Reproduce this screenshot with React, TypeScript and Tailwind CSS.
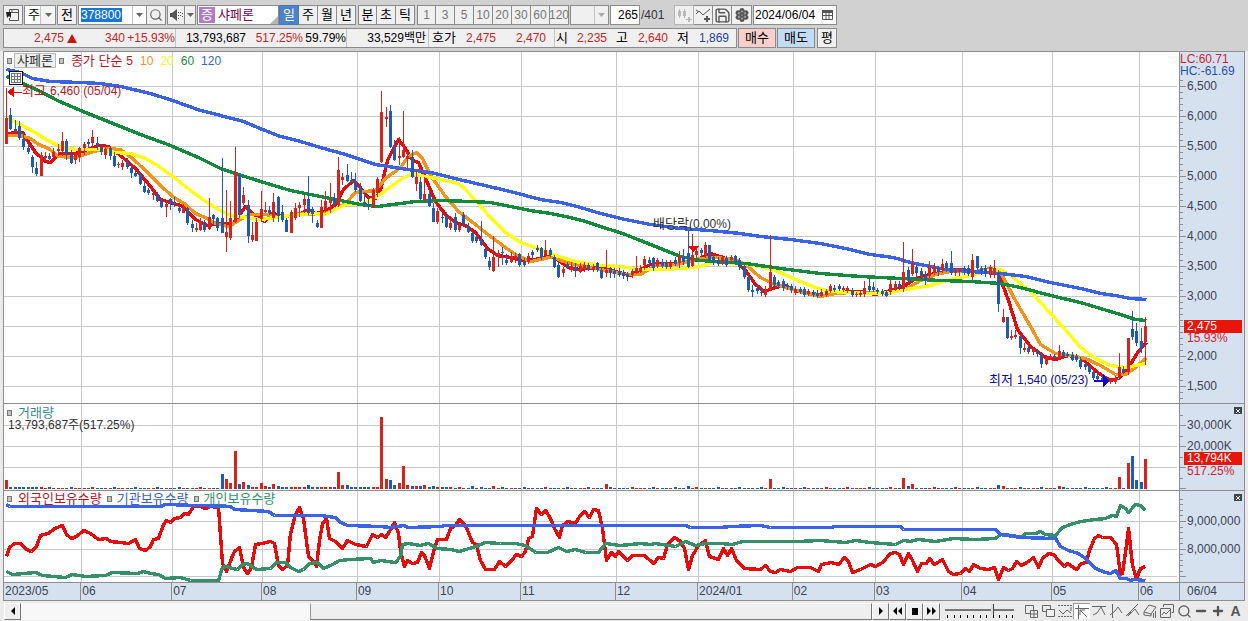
import type { ReactNode } from 'react';
import { Search, Save, Settings, Minus, Plus } from 'lucide-react';

type Candle = [number, number, number, number, number];

// high, body top, body bottom, low, rising (1) or falling (0)
const candles: Candle[] = [
  [88,118,144,144,1],[108,115,129,130,0],[120,129,131,132,0],[121,126,138,140,0],[132,139,147,150,0],
  [143,148,152,154,0],[155,157,167,173,0],[162,168,174,176,0],[152,155,176,176,1],[152,156,158,160,1],
  [153,156,159,160,0],[148,152,157,158,1],[144,149,151,156,1],[132,141,151,156,1],[139,141,154,160,0],
  [150,155,163,164,0],[152,154,160,164,1],[147,148,157,162,1],[142,144,148,155,1],[139,142,144,147,0],
  [130,137,143,148,1],[137,143,145,150,0],[145,147,152,155,0],[147,149,155,159,1],[147,148,156,160,0],
  [152,156,166,167,0],[162,164,165,168,1],[160,163,167,170,1],[158,162,167,169,0],[166,168,173,178,0],
  [168,173,176,177,0],[172,174,184,185,0],[182,186,192,193,0],[188,190,193,195,0],[188,193,195,200,1],
  [192,194,201,202,0],[198,201,207,208,0],[202,204,207,217,1],[198,199,204,210,0],[197,203,205,207,0],
  [205,208,211,213,0],[204,207,213,213,1],[207,208,223,225,0],[220,224,228,232,0],[223,228,230,232,1],
  [218,221,230,231,1],[220,222,230,232,0],[198,217,229,230,1],[214,215,219,225,0],[217,218,228,231,0],
  [158,218,233,233,0],[190,232,237,252,1],[201,218,238,240,1],[147,172,222,223,1],[173,174,215,218,0],
  [187,195,203,205,1],[200,205,236,243,0],[222,235,240,242,1],[218,222,241,241,1],[191,209,219,221,1],
  [202,210,212,213,1],[206,210,213,215,0],[193,202,218,222,1],[196,197,216,222,0],[205,212,220,222,0],
  [218,220,232,232,0],[210,212,233,233,1],[203,208,218,220,1],[202,205,208,217,1],[195,199,205,213,1],
  [176,199,213,215,0],[207,209,214,223,0],[220,223,227,228,0],[200,207,228,228,1],[191,201,210,212,1],
  [183,200,203,213,1],[193,198,204,207,0],[157,170,205,207,1],[173,177,180,185,1],[164,175,181,182,0],
  [172,180,182,183,0],[173,181,190,192,0],[183,187,201,202,0],[192,202,204,207,0],[198,204,206,210,0],
  [188,190,207,208,1],[177,179,193,197,1],[91,112,162,163,1],[107,117,119,127,1],[105,111,147,148,0],
  [140,147,160,161,0],[137,156,158,165,1],[111,150,157,158,1],[152,156,159,170,1],[150,157,177,178,0],
  [170,177,184,191,1],[177,182,199,200,0],[177,194,200,202,1],[190,194,206,207,0],[203,208,222,222,0],
  [208,211,222,224,1],[213,217,218,223,0],[212,217,227,228,0],[218,223,228,230,1],[213,217,230,232,0],
  [222,225,230,232,1],[212,215,224,227,0],[223,226,232,233,0],[232,233,241,243,0],[235,237,241,243,0],
  [221,240,245,246,0],[247,249,257,259,0],[257,261,267,270,0],[236,257,271,272,1],[250,253,257,267,1],
  [247,252,253,265,0],[254,260,263,265,0],[252,256,262,263,1],[253,256,258,263,1],[253,254,265,267,0],
  [258,262,265,267,0],[253,256,262,264,1],[250,252,255,260,0],[245,248,250,252,0],[247,248,257,260,0],
  [240,250,255,257,1],[248,250,255,257,0],[255,257,267,268,0],[262,265,277,278,0],[267,269,273,277,1],
  [262,264,267,268,0],[262,266,270,272,1],[263,267,271,277,0],[263,266,272,273,1],[262,265,269,272,1],
  [263,265,269,271,0],[264,267,270,272,1],[262,263,270,272,0],[267,270,278,279,0],[250,270,273,277,1],
  [267,269,273,278,0],[268,271,274,278,0],[268,271,275,277,0],[270,273,276,279,0],[272,274,277,281,0],
  [269,271,275,278,1],[256,268,272,274,1],[265,268,272,273,1],[256,259,265,270,1],[257,260,263,267,0],
  [257,258,268,271,0],[258,260,266,268,1],[259,262,266,268,0],[260,263,267,269,0],[260,263,267,269,1],
  [257,260,264,266,0],[251,256,263,268,1],[249,256,262,264,0],[231,253,267,268,0],[234,255,266,267,1],
  [249,251,255,258,1],[248,250,253,256,0],[242,245,255,258,1],[245,245,260,262,0],[254,257,263,265,0],
  [257,260,264,266,0],[255,257,263,265,1],[256,258,265,267,0],[255,257,260,263,1],[255,256,262,264,0],
  [258,260,267,270,0],[265,266,277,279,0],[275,277,290,292,0],[285,290,292,297,0],[284,288,291,294,0],
  [288,292,293,296,0],[286,290,295,297,1],[235,272,288,290,1],[275,277,285,287,0],[280,282,286,288,0],
  [279,281,288,291,0],[283,285,287,290,0],[284,286,290,293,0],[286,289,293,295,1],[287,289,292,294,0],
  [287,289,295,297,0],[289,291,294,296,1],[290,292,295,297,0],[290,293,296,298,0],[289,292,296,297,1],
  [289,291,295,297,1],[284,286,291,293,1],[285,288,290,292,0],[284,286,289,291,0],[286,288,290,292,1],
  [286,288,291,293,1],[288,291,295,297,0],[292,294,295,297,1],[291,293,295,297,1],[281,288,294,297,1],
  [279,286,290,292,0],[282,287,290,292,0],[288,290,292,294,0],[289,291,294,296,0],[290,292,296,297,0],
  [280,284,292,295,1],[281,284,288,291,1],[281,284,287,290,0],[242,272,289,292,1],[267,270,281,283,0],
  [249,263,274,276,1],[265,267,273,278,0],[268,271,275,279,0],[271,275,280,285,0],[261,266,276,281,1],
  [263,267,273,275,1],[266,268,271,276,0],[259,264,270,273,1],[261,263,268,272,0],[251,263,273,275,0],
  [268,271,273,276,1],[268,270,272,276,1],[266,268,271,275,0],[265,268,274,276,0],[254,260,277,280,1],
  [256,256,268,270,0],[266,268,271,275,0],[265,268,274,277,0],[265,267,275,278,1],[260,268,275,278,1],
  [270,273,304,312,0],[309,317,322,323,1],[317,317,338,339,0],[330,336,338,340,1],[330,335,337,339,1],
  [335,336,348,354,0],[343,348,350,352,1],[346,348,352,354,0],[347,349,352,355,1],[349,351,354,357,0],
  [353,355,364,368,0],[355,357,364,365,1],[354,356,358,360,1],[354,356,358,359,0],[345,351,358,360,1],
  [350,352,356,358,0],[352,354,356,358,0],[352,355,360,361,0],[354,356,360,362,0],[357,360,367,369,0],
  [361,364,367,370,0],[365,367,372,374,0],[370,372,378,380,0],[373,376,379,382,0],[375,378,380,382,0],
  [377,379,382,384,0],[378,380,382,384,1],[376,378,382,384,1],[353,367,377,380,1],[366,369,372,374,0],
  [338,338,372,375,1],[311,329,337,340,0],[323,331,343,346,0],[328,341,349,353,0],[317,326,342,365,1],
];

// bar heights of the busy days, every other day stays near zero
const busyDays: Record<number, number> = {
  0: 9, 50: 15, 51: 10, 52: 6, 53: 38, 54: 5, 55: 7, 56: 4, 59: 6, 60: 3, 62: 5, 63: 3, 70: 4, 77: 17, 78: 4, 79: 4,
  87: 72, 88: 10, 89: 9, 90: 4, 91: 6, 92: 23, 93: 4, 94: 3, 95: 3, 96: 3, 97: 4, 99: 3, 108: 3, 113: 3, 139: 5,
  158: 3, 177: 10, 208: 11, 209: 3, 210: 5, 230: 4, 231: 3, 244: 3, 258: 12, 260: 26, 261: 33, 262: 9, 263: 7, 264: 30,
};

const RED = '#d4241c';
const BLUE = '#1f5bb5';

const ma120 = '6,69 20,72 32,78 50,81 80,82 100,83 120,86 150,93 172,100 200,110 220,115 243,121 262,129 280,136 300,141 320,147 345,154 375,164 400,168 430,172 450,177 480,184 510,191 540,199 560,202 580,207 600,213 620,218 650,224 680,228 710,230 740,233 760,236 790,239 820,243 845,248 870,254 893,257 910,262 930,266 945,269 970,271 1000,273 1025,276 1050,282 1080,288 1100,293 1115,295 1130,298 1146,299';
const ma60 = '6,76 20,82 40,91 57,100 80,110 100,118 120,126 140,134 170,145 200,158 220,168 235,173 260,181 290,190 315,195 330,198 360,204 377,206 400,203 415,201 440,200 470,201 490,202 510,206 530,210 550,213 570,217 585,221 600,226 622,233 640,240 660,248 680,256 700,260 730,262 745,263 780,268 820,273 860,276 900,278 940,280 970,281 1000,283 1020,287 1050,295 1080,302 1100,308 1120,314 1135,319 1146,320';
const ma20 = '6,118 20,124 33,131 45,139 60,146 75,149 100,149 115,152 130,153 145,158 160,167 175,178 190,190 205,201 218,209 230,215 245,217 260,219 275,217 290,215 310,213 325,214 337,208 345,204 360,204 372,199 385,190 400,179 412,173 425,176 440,179 455,182 463,187 475,200 490,217 505,232 520,242 535,247 555,255 575,261 600,265 620,266 640,269 660,269 680,268 700,266 712,262 725,262 740,263 760,266 775,270 795,279 815,287 830,291 850,292 870,293 890,292 905,289 930,285 950,279 970,275 990,270 1000,269 1010,275 1030,291 1050,313 1070,335 1080,347 1095,358 1110,365 1125,367 1140,364 1146,363';
const ma10 = '6,135 20,135 30,138 38,144 48,148 58,156 75,157 90,152 105,148 120,149 132,158 145,170 160,185 172,196 185,204 195,213 207,218 215,223 228,226 240,219 250,214 265,214 280,217 300,213 320,214 333,210 345,203 355,192 375,190 385,178 400,167 408,156 416,152 422,158 430,175 445,196 458,211 475,224 490,236 505,247 515,254 530,261 545,258 553,256 560,260 570,263 590,267 610,271 625,274 640,274 655,265 675,264 700,258 715,257 735,259 745,264 760,277 772,283 785,287 800,291 820,296 835,293 850,292 870,292 885,293 905,289 920,280 935,274 950,271 975,271 990,268 1000,272 1015,300 1030,326 1040,344 1055,353 1070,355 1085,358 1100,365 1115,374 1125,374 1135,367 1146,357';
const ma5 = '6,133 22,132 27,140 35,152 45,161 50,162 60,153 75,153 90,148 98,145 108,146 120,155 135,168 150,186 160,199 170,202 183,206 195,219 207,225 220,223 232,224 240,213 245,206 252,213 264,221 272,213 285,216 300,213 308,209 315,213 325,211 335,204 343,189 353,180 358,185 368,197 375,198 380,190 387,160 393,148 398,139 405,148 412,160 418,162 425,178 435,201 445,214 455,222 465,225 475,232 487,248 497,255 510,257 522,260 535,259 550,255 558,260 570,268 580,269 600,266 615,271 630,275 640,269 650,264 665,263 680,263 695,260 710,253 725,258 737,262 745,270 755,284 764,291 775,287 785,285 795,290 810,293 825,295 840,291 860,291 875,294 890,290 903,286 915,278 925,275 940,272 955,269 975,271 990,268 998,273 1008,300 1017,329 1030,346 1045,357 1055,359 1068,355 1080,357 1090,366 1100,374 1110,380 1118,378 1127,369 1137,352 1146,342';

const foreign = '6,556 9,547 14,543 20,543 26,549 31,551 36,546 40,535 48,533 54,528 62,525 66,534 71,538 76,536 83,530 90,533 98,539 106,538 110,541 120,542 128,543 135,539 139,548 145,550 150,546 153,539 158,538 163,524 166,520 170,522 174,518 180,517 184,513 188,514 193,506 200,506 205,508 210,506 218,507 220,535 222,563 226,571 231,558 234,551 239,547 243,567 247,573 251,567 255,544 262,543 270,541 274,543 278,565 282,569 287,565 290,533 295,514 299,507 303,518 308,556 314,562 316,566 319,540 322,523 326,518 329,538 335,541 342,548 347,540 355,544 366,546 372,534 377,537 381,534 385,537 389,531 394,522 398,533 400,550 404,566 407,560 412,563 417,562 421,552 424,555 429,568 434,548 437,539 446,539 450,528 455,525 459,519 465,525 472,542 476,544 480,560 485,569 494,569 499,561 505,566 511,560 516,554 521,556 525,551 528,538 532,536 536,508 541,514 545,510 550,518 554,528 559,537 562,525 567,521 575,523 579,516 584,511 589,517 593,509 598,510 602,528 606,560 611,552 615,556 618,551 627,560 632,555 644,555 653,563 658,557 663,558 667,544 674,537 680,541 684,548 688,569 692,555 698,545 705,540 709,556 718,559 723,548 727,555 731,548 736,560 744,568 760,569 765,565 770,571 775,572 780,569 790,571 797,567 810,567 818,571 821,564 831,562 838,564 844,557 848,561 852,572 860,569 870,564 875,566 882,562 890,553 895,552 899,554 903,564 908,553 912,560 917,571 921,563 926,563 929,558 934,564 942,559 948,571 953,574 960,573 965,568 969,571 973,564 980,568 988,569 994,567 998,579 1003,567 1008,570 1012,568 1016,561 1021,565 1028,561 1033,557 1038,567 1042,558 1048,553 1053,554 1058,560 1064,566 1067,563 1076,569 1081,563 1086,562 1089,550 1094,538 1098,535 1102,537 1110,537 1116,544 1120,574 1122,573 1125,552 1128,528 1132,565 1136,578 1140,568 1145,566';
const institution = '6,504 9,506 160,506 165,504 230,506 234,509 268,511 274,515 320,515 335,517 340,522 347,525 380,526 390,527 403,525 408,527 440,526 445,525 685,525 690,527 720,527 730,526 760,525 770,527 830,527 835,526 900,526 903,529 995,529 1000,534 1012,535 1020,537 1055,538 1060,546 1068,550 1078,553 1085,558 1095,568 1105,572 1110,573 1115,570 1120,578 1126,578 1130,580 1134,579 1145,580';
const retail = '6,571 12,574 35,572 42,575 65,577 72,574 85,576 105,575 112,572 137,573 143,571 150,573 158,574 165,578 180,577 190,580 218,580 222,567 226,566 232,568 237,569 242,564 247,563 256,569 270,568 276,562 285,562 290,567 298,571 303,569 309,563 317,562 323,568 332,564 339,560 350,559 370,558 373,562 380,560 395,562 400,556 402,544 408,543 420,545 428,543 437,548 450,549 459,551 475,546 485,542 500,543 515,543 525,545 535,552 547,552 558,547 566,551 575,549 585,552 598,552 605,543 620,545 640,543 650,544 655,543 675,546 685,541 695,545 705,543 720,543 732,544 742,541 797,541 820,540 845,542 855,540 870,542 895,544 903,540 910,541 918,539 935,541 953,538 975,539 995,538 1000,534 1020,537 1025,533 1035,533 1040,531 1045,534 1055,535 1062,527 1070,524 1080,521 1095,519 1105,518 1112,515 1116,516 1120,505 1125,508 1128,512 1135,504 1140,505 1145,510';

const months: [string, number][] = [
  ['2023/05', 77], ['06', 91], ['07', 90], ['08', 95], ['09', 82], ['10', 82], ['11', 95],
  ['12', 82], ['2024/01', 95], ['02', 82], ['03', 87], ['04', 90], ['05', 87], ['06', 40],
];
const monthLines = [81, 172, 262, 357, 439, 521, 616, 698, 793, 875, 962, 1052, 1139];

const candleX = (i: number) => Math.round(6 + i * 4.314);
const range = (from: number, to: number, step: number) =>
  Array.from({ length: Math.floor((to - from) / step) + 1 }, (_, i) => from + i * step);

const Grid = ({ top, bottom, rows }: { top: number; bottom: number; rows: number[] }) => (
  <g fill="#c9c9cd">
    {monthLines.map((x) => <rect key={x} x={x} y={top} width={1} height={bottom - top} />)}
    {rows.map((y) => <rect key={y} x={4} y={y} width={1173} height={1} />)}
  </g>
);

const Plot = ({ top, bottom, rows, children }: { top: number; bottom: number; rows: number[]; children: ReactNode }) => (
  <svg
    className="absolute inset-0 h-full w-full"
    viewBox={`4 ${top} 1175 ${bottom - top}`}
    preserveAspectRatio="none"
    shapeRendering="crispEdges"
  >
    <Grid top={top} bottom={bottom} rows={rows} />
    {children}
  </svg>
);

const Line = ({ points, color }: { points: string; color: string }) => (
  <polyline points={points} transform="translate(0.5 0.5)" fill="none" stroke={color} strokeWidth={3.4} strokeLinejoin="round" />
);

const Ticks = ({ top, bottom, minor, major }: { top: number; bottom: number; minor: number[]; major: number[] }) => (
  <svg className="absolute left-0 top-0 h-full w-2" viewBox={`0 ${top} 8 ${bottom - top}`} preserveAspectRatio="none" shapeRendering="crispEdges">
    {minor.map((y) => <rect key={y} x={0} y={y} width={3} height={1} fill="#8a8f98" />)}
    {major.map((y) => <rect key={y} x={0} y={y} width={6} height={1} fill="#8a8f98" />)}
  </svg>
);

const Bullet = () => <span className="h-[6px] w-[5px] border border-[#777] bg-[#c4c4c4]" />;

const CloseBox = ({ label }: { label: string }) => (
  <button aria-label={label} className="absolute right-[2px] top-[3px] flex h-[7px] w-2 items-center justify-center bg-[#3c4450]">
    <svg width="4" height="4" viewBox="0 0 4 4" stroke="#fff" strokeWidth="1"><path d="M0 0l4 4M4 0l-4 4" /></svg>
  </button>
);

const Caret = ({ className = 'fill-[#666]' }: { className?: string }) => (
  <svg width="7" height="4" viewBox="0 0 7 4" className={className}><path d="M0 0h7L3.500 4z" /></svg>
);

const box = 'flex h-5 items-center justify-center border border-[#8b8b8b] bg-[#f0f0f0]';

const Toolbar = () => (
  <div className="flex items-center pl-[3px] pt-[5px]">
    <button aria-label="창 배치" className={`${box} w-5`}>
      <svg width="14" height="14" viewBox="0 0 14 14" fill="none" stroke="#555">
        <path d="M3.500 4v-2.500h9v11h-9v-2.500M4 4.500h8M6 1.500v3" />
        <path d="M0 4h5v6l-2-2-2 2z" fill="#222" stroke="none" />
      </svg>
    </button>
    <div className={`${box} relative ml-[1px] w-8 bg-white`}>
      <select aria-label="종목 구분" className="h-full w-full appearance-none bg-transparent pl-[3px] text-[13px] leading-4">
        <option>주</option>
      </select>
      <span className="pointer-events-none absolute inset-y-0 right-0 flex w-[15px] items-center justify-center border-l border-[#c4c4c4] bg-[#f4f4f4]"><Caret /></span>
    </div>
    <button className={`${box} ml-[1px] w-5 text-[13px]`}>전</button>
    <div className={`${box} ml-[1px] w-[69px] justify-start bg-white`}>
      <label className="flex min-w-0 flex-1 items-center pl-[2px]">
        <input aria-label="종목코드" defaultValue="378800" className="h-[14px] w-[41px] bg-[#1577d3] text-[12px] text-white outline-none" />
      </label>
      <button aria-label="최근 종목" className="flex h-full w-[14px] items-center justify-center border-l border-[#c4c4c4]"><Caret /></button>
    </div>
    <button aria-label="종목 검색" className={`${box} w-[19px] border-l-0`}><Search size={14} color="#666" strokeWidth={2} /></button>
    <button aria-label="소리" className={`${box} ml-[1px] w-[18px]`}>
      <svg width="13" height="12" viewBox="0 0 13 12" fill="#555">
        <path d="M0 4h2l5-4v12l-5-4h-2z" /><path d="M8 3h1v1h-1zM8 6h1v1h-1zM8 9h1v1h-1zM10 3h1v1h-1zM10 6h1v1h-1zM12 4h1v1h-1zM12 7h1v1h-1z" />
      </svg>
    </button>
    <button aria-label="소리 메뉴" className={`${box} w-[11px] border-l-0`}><Caret /></button>
    <div className={`${box} relative ml-[1px] w-[82px] justify-start bg-white pl-[1px] text-[13px]`}>
      <span className="flex h-4 w-4 items-center justify-center bg-[#b07cc6] text-white">증</span>
      <span className="pl-[3px] text-[#780050]">샤페론</span>
      <svg className="absolute bottom-0 right-0" width="8" height="8" viewBox="0 0 8 8" fill="#b4b4b4"><path d="M8 0v8h-8z" /></svg>
    </div>
    <div className="flex text-[13px]">
      <button className="flex h-5 w-5 items-center justify-center border border-[#4a79b8] bg-[#4c82c8] text-white">일</button>
      {['주', '월', '년'].map((t) => <button key={t} className={`${box} w-[19px] border-l-0`}>{t}</button>)}
    </div>
    <div className="ml-[2px] flex text-[13px]">
      {['분', '초', '틱'].map((t) => <button key={t} className={`${box} w-[19px] border-l-0 first:border-l`}>{t}</button>)}
    </div>
    <div className="ml-[2px] flex">
      {['1', '3', '5', '10', '20', '30', '60', '120'].map((t) => (
        <button key={t} className={`${box} w-[19px] border-l-0 text-[#777] first:border-l`}>{t}</button>
      ))}
    </div>
    <div className={`${box} relative ml-[1px] w-[39px]`}>
      <select aria-label="분 단위" disabled className="h-full w-full appearance-none" />
      <span className="pointer-events-none absolute inset-y-0 right-0 flex w-[14px] items-center justify-center border-l border-[#c4c4c4]"><Caret className="fill-[#aaa]" /></span>
    </div>
    <input aria-label="표시 개수" defaultValue="265" className="ml-[1px] h-5 w-[30px] border border-[#8b8b8b] bg-white pr-[1px] text-right text-[12px]" />
    <span className="w-[34px] pl-[1px] text-[#333]">/401</span>
    <button aria-label="봉 추가" disabled className={`${box} w-5 border-[#b4b4b4]`}>
      <svg width="15" height="15" viewBox="0 0 15 15" fill="#b8b8b8"><path d="M2 1h1v9h-1zM1 3h3v5h-3zM7 1h1v9h-1zM6 3h3v5h-3zM11 9h2v5h-2zM9 11h6v1h-6z" /></svg>
    </button>
    <button aria-label="지표 추가" className={`${box} w-[19px] border-l-0`}>
      <svg width="15" height="15" viewBox="0 0 15 15" fill="none" stroke="#555"><path d="M0 6l3-3 4 4 7-6M0 2l3 2" /><path d="M11 8v6M8 11h6" strokeWidth="2" /></svg>
    </button>
    <button aria-label="저장" className={`${box} w-[19px] border-l-0`}><Save size={17} color="#555" strokeWidth={2} /></button>
    <button aria-label="설정" className={`${box} w-[20px] border-l-0`}><Settings size={14} color="#555" strokeWidth={4} /></button>
    <div className={`${box} ml-[1px] w-[84px] bg-white`}>
      <input aria-label="날짜" defaultValue="2024/06/04" className="w-[64px] pl-[1px] text-[12px] outline-none" />
      <button aria-label="달력" className="flex flex-1 justify-center">
        <svg width="11" height="10" viewBox="0 0 11 10" fill="none" stroke="#555"><path d="M.5 1.500h10v8h-10zM.5 5.500h10M4 3v6M7 3v6" /><path d="M0 0h11v3h-11z" fill="#555" stroke="none" /></svg>
      </button>
    </div>
  </div>
);

const QuoteBar = () => (
  <div className="mt-[3px] flex pl-[3px]">
    <div className="flex h-5 w-[734px] items-center border border-[#8b8b8b] bg-[#f0f0f0] text-[#cc1f1f]">
      <div className="flex h-full w-[172px] items-center border-r border-[#c4c4c4]">
        <span className="w-[60px] text-right">2,475</span>
        <svg className="ml-[3px]" width="10" height="9" viewBox="0 0 10 9" fill="#d0140c"><path d="M5 0l5 9h-10z" /></svg>
        <span className="w-[48px] text-right">340</span>
        <span className="flex-1 text-right">+15.93%</span>
      </div>
      <div className="flex h-full w-[171px] items-center border-r border-[#c4c4c4]">
        <span className="w-[70px] text-right text-black">13,793,687</span>
        <span className="w-[57px] text-right">517.25%</span>
        <span className="flex-1 text-right text-black">59.79%</span>
      </div>
      <div className="flex h-full w-[82px] items-center justify-end border-r border-[#c4c4c4] pr-[2px] text-black">33,529백만</div>
      <div className="flex h-full w-[126px] items-center border-r border-[#c4c4c4] pl-[3px]">
        <span className="w-[24px] text-[13px] text-black">호가</span>
        <span className="w-[40px] text-right">2,475</span>
        <span className="w-[50px] text-right">2,470</span>
      </div>
      <div className="flex flex-1 items-center pl-[1px] text-black">
        <span className="w-[11px] text-[13px]">시</span>
        <span className="w-[40px] text-right text-[#cc1f1f]">2,235</span>
        <span className="ml-[9px] w-[12px] text-[13px]">고</span>
        <span className="w-[40px] text-right text-[#cc1f1f]">2,640</span>
        <span className="ml-[9px] w-[12px] text-[13px]">저</span>
        <span className="w-[40px] text-right text-[#1f3fa8]">1,869</span>
      </div>
    </div>
    <button className="ml-[1px] h-5 w-[38px] border border-[#8b8b8b] bg-[#f8cfcb] text-[13px] leading-4">매수</button>
    <button className="ml-[1px] h-5 w-[38px] border border-[#8b8b8b] bg-[#c3dcf5] text-[13px] leading-4">매도</button>
    <button className="ml-[2px] h-5 w-5 border border-[#8b8b8b] bg-[#f0f0f0] text-[13px] leading-4">평</button>
  </div>
);

const PricePanel = () => (
  <div className="flex h-[352px] border-b border-[#8e8e8e]">
    <div className="relative flex-1">
      <Plot top={52} bottom={403} rows={range(86, 386, 30)}>
        <Line points={ma5} color="#e60a0a" />
        <Line points={ma10} color="#f29418" />
        <Line points={ma20} color="#ffff14" />
        <Line points={ma60} color="#138a3c" />
        <Line points={ma120} color="#3a62e4" />
        {candles.map(([high, top, bottom, low, up], i) => (
          <g key={i} fill={up ? RED : BLUE}>
            <rect x={candleX(i)} y={high} width={1} height={low - high} />
            <rect x={candleX(i) - 1} y={top} width={3} height={bottom - top} />
          </g>
        ))}
        <path d="M7 92l7-5v10z M13 92h9v1h-9z" fill="#d80f0f" />
        <path d="M687 246h12l-6 6z" fill="#e60a0a" />
        <path d="M1110 381l-7-6v5h-9v2h9v5z" fill="#0606d8" />
      </Plot>
      <div className="absolute left-[3px] top-0 flex h-[17px] items-center whitespace-nowrap text-[#b8141c]">
        <Bullet />
        <button className="ml-[2px] h-[15px] border border-[#bbb] bg-[#efefef] px-[2px] text-[13px] leading-[13px] text-[#333]">샤페론</button>
        <span className="ml-[3px] flex items-center gap-[7px]">
          <Bullet />
          <span className="flex gap-1"><span className="text-[13px]">종가 단순</span>5</span>
          <span className="text-[#e8902a]">10</span>
          <span className="text-[#f6f62a]">20</span>
          <span className="text-[#1a8a42]">60</span>
          <span className="text-[#3a62d4]">120</span>
        </span>
      </div>
      <svg className="absolute left-[5px] top-[19px]" width="14" height="14" viewBox="0 0 14 14" fill="none" shapeRendering="crispEdges">
        <rect x="0.500" y="0.500" width="13" height="13" fill="#f4f4f4" stroke="#111" />
        <path d="M2.500 2.500h9v9h-9zM2.500 5.500h9M2.500 8.500h9M5.500 2.500v9M8.500 2.500v9" stroke="#777" />
      </svg>
      <span className="absolute left-[18px] top-[31px] flex gap-1 whitespace-nowrap leading-4 text-[#b8141c]"><span className="text-[13px]">최고</span>6,460 (05/04)</span>
      <span className="absolute left-[649px] top-[164px] flex whitespace-nowrap leading-4 text-[#333]"><span className="text-[13px]">배당락</span>(0.00%)</span>
      <span className="absolute left-[985px] top-[320px] flex gap-1 whitespace-nowrap leading-4 text-[#0a0a9c]"><span className="text-[13px]">최저</span>1,540 (05/23)</span>
    </div>
    <div className="relative w-[65px] border-l border-[#8e8e8e] bg-[#d6e1ef]">
      <Ticks top={52} bottom={403} minor={range(80, 398, 6)} major={range(86, 386, 30)} />
      <div className="absolute left-0 top-[1px] whitespace-nowrap leading-[12px]">
        <div className="text-[#cc1f2f]">LC:60.71</div>
        <div className="text-[#1f4fb8]">HC:-61.69</div>
      </div>
      <div className="pt-[19px] text-[#3c4454]">
        {['6,500', '6,000', '5,500', '5,000', '4,500', '4,000', '3,500', '3,000'].map((p) => (
          <div key={p} className="flex h-[30px] items-center pl-[7px]">{p}</div>
        ))}
        <div className="relative flex h-[30px] items-center pl-[4px]">
          <span className="h-[13px] w-[58px] bg-[#ea1508] pl-[3px] leading-[13px] text-white">2,475</span>
          <span className="absolute left-[7px] top-[21px] leading-[13px] text-[#cc1f2f]">15.93%</span>
        </div>
        {['2,000', '1,500'].map((p) => (
          <div key={p} className="flex h-[30px] items-center pl-[7px]">{p}</div>
        ))}
      </div>
    </div>
  </div>
);

const VolumePanel = () => (
  <div className="flex h-[87px] border-b border-[#8e8e8e]">
    <div className="relative flex-1">
      <Plot top={404} bottom={490} rows={[425, 446, 467]}>
        {candles.map((c, i) => {
          const h = busyDays[i] ?? (i > 56 && i < 104 ? 2 : i < 9 || i % 5 === 0 ? 2 : 1);
          return <rect key={i} x={candleX(i) - 1} y={489 - h} width={3} height={h} fill={c[4] ? RED : BLUE} />;
        })}
      </Plot>
      <div className="absolute left-[3px] top-[2px] text-[#338a94]">
        <div className="flex h-[13px] items-center gap-[6px] text-[13px]"><Bullet />거래량</div>
        <div className="pl-[1px] leading-[13px] text-[#333]">13,793,687주(517.25%)</div>
      </div>
    </div>
    <div className="relative w-[65px] border-l border-[#8e8e8e] bg-[#d6e1ef] pt-[10px] text-[#3c4454]">
      <Ticks top={404} bottom={490} minor={[415, 436, 457, 478]} major={[425, 446, 467, 488]} />
      <CloseBox label="거래량 닫기" />
      <div className="flex h-[21px] items-center pl-[7px]">30,000K</div>
      <div className="flex h-[21px] items-center pl-[7px]">20,000K</div>
      <div className="relative -mt-1 ml-[4px] h-[13px] w-[58px] bg-[#ea1508] pl-[3px] leading-[13px] text-white">13,794K</div>
      <div className="pl-[7px] leading-[12px] text-[#cc1f2f]">517.25%</div>
    </div>
  </div>
);

const HoldingsPanel = () => (
  <div className="flex h-[92px] border-b border-[#8e8e8e]">
    <div className="relative flex-1">
      <Plot top={491} bottom={582} rows={[521, 549, 576]}>
        <Line points={foreign} color="#ea0a0a" />
        <Line points={retail} color="#35906a" />
        <Line points={institution} color="#3a62ea" />
      </Plot>
      <div className="absolute left-[3px] top-0 flex h-4 items-center gap-[5px] whitespace-nowrap text-[13px]">
        <Bullet /><span className="pl-[1px] text-[#b8141c]">외국인보유수량</span>
        <Bullet /><span className="text-[#3a62c4]">기관보유수량</span>
        <Bullet /><span className="text-[#35906a]">개인보유수량</span>
      </div>
    </div>
    <div className="relative w-[65px] border-l border-[#8e8e8e] bg-[#d6e1ef] pt-4 text-[#3c4454]">
      <Ticks top={491} bottom={582} minor={[499, 504, 510, 515, 527, 532, 538, 543, 554, 560, 565, 571]} major={[521, 549, 576]} />
      <CloseBox label="보유수량 닫기" />
      <div className="flex h-[28px] items-center pl-[7px]">9,000,000</div>
      <div className="flex h-[28px] items-center pl-[7px]">8,000,000</div>
    </div>
  </div>
);

const DateAxis = () => (
  <div className="flex h-[18px] border-b border-[#8e8e8e] bg-[#d6e1ef] leading-[16px] text-[#3c4454]">
    <div className="flex min-w-0 flex-1">
      {months.map(([label, span], i) => (
        <span key={i} className="basis-0 whitespace-nowrap border-l border-[#8e8e8e] pl-[1px] first:border-l-0" style={{ flexGrow: span }}>{label}</span>
      ))}
    </div>
    <span className="w-[65px] border-l border-[#8e8e8e] pl-[7px]">06/04</span>
  </div>
);

const Tool = ({ label, active = false, children }: { label: string; active?: boolean; children: ReactNode }) => (
  <button aria-label={label} className={`flex h-4 w-[17px] items-center justify-center ${active ? 'border-l border-t border-[#999] bg-white' : ''}`}>
    <svg width="14" height="14" viewBox="0 0 14 14" fill="none" stroke="#666">{children}</svg>
  </button>
);

const key = 'flex h-[17px] w-[17px] items-center justify-center border border-b-[#777] border-l-white border-r-[#777] border-t-white bg-[#f0f0f0]';

const BottomBar = () => (
  <div className="flex h-[20px] items-center pl-[4px] pr-1">
    <div className="flex flex-1 items-center">
      <button aria-label="왼쪽으로" className={key}>
        <svg width="4" height="8" viewBox="0 0 4 8"><path d="M4 0v8l-4-4z" /></svg>
      </button>
      <div className="flex h-[17px] flex-1 bg-[#f8f8f8]">
        <div className="w-[34%]" />
        <div className="flex-1 border border-b-[#777] border-l-[#999] border-r-[#777] border-t-white bg-[#efefef]" />
      </div>
      <button aria-label="오른쪽으로" className={key}>
        <svg width="4" height="8" viewBox="0 0 4 8"><path d="M0 0v8l4-4z" /></svg>
      </button>
      <button aria-label="되감기" className={key}>
        <svg width="9" height="8" viewBox="0 0 9 8"><path d="M4 0v8l-4-4zM9 0v8l-4-4z" /></svg>
      </button>
      <button aria-label="정지" className={key}><span className="h-[7px] w-[6px] bg-black" /></button>
      <button aria-label="빨리감기" className={key}>
        <svg width="9" height="8" viewBox="0 0 9 8"><path d="M0 0v8l4-4zM5 0v8l4-4z" /></svg>
      </button>
    </div>
    <div className="ml-[5px] w-[69px]">
      <input
        type="range"
        aria-label="봉 간격"
        defaultValue={69}
        className="block h-[11px] w-full appearance-none bg-[linear-gradient(#777,#777)] bg-[length:100%_2px] bg-center bg-no-repeat [&::-webkit-slider-thumb]:h-[11px] [&::-webkit-slider-thumb]:w-[3px] [&::-webkit-slider-thumb]:appearance-none [&::-webkit-slider-thumb]:border-r [&::-webkit-slider-thumb]:border-[#444] [&::-webkit-slider-thumb]:bg-[#ddd]"
      />
      <svg className="block w-full" height="3" viewBox="0 0 69 3" preserveAspectRatio="none" shapeRendering="crispEdges">
        {range(2, 67, 6.5).map((x) => <rect key={x} x={Math.round(x)} y={0} width={1} height={3} />)}
      </svg>
    </div>
    <div className="ml-2 flex w-[222px] items-center justify-between">
      <Tool label="새 창"><path d="M1.500 1.500h8v8h-8z" /><path d="M6.500 6.500h7v7h-7zM10 7v6M7 10h6" fill="#f0f0f0" /></Tool>
      <Tool label="창 복제"><path d="M1.500 1.500h8v6h-8z" /><path d="M5.500 5.500h8v7h-8z" fill="#f0f0f0" /></Tool>
      <Tool label="영역"><path d="M0 1.500h14M0 12.500h14" strokeDasharray="2 1" /><path d="M1 6l4 4 4-4 4 3M13 3v4" /></Tool>
      <Tool label="커서" active><path d="M0 3.500h14M3.500 0v14" /><path d="M5 5l7 7M5 10v-5h5" /></Tool>
      <Tool label="고가선"><path d="M0 2.500h14M1 11l4-2 4-6 4 8" /></Tool>
      <Tool label="추세"><path d="M3.500 0v14M1 11l5-4 3-4 4 6" /></Tool>
      <Tool label="부채꼴"><path d="M0 12l12-12M2 12l7-7 4 6M0 12l5-4" /></Tool>
      <Tool label="지우개"><path d="M1 8l5-7 7 2-5 7zM1 8v3l7 1v-2M10.500 9v5M12.500 7v7" /></Tool>
      <Tool label="차트 복사"><path d="M3.500 3v-2.500h10v8h-2M.5 4.500h10v9h-10zM2 11l2-3 2 2 4-4" /></Tool>
      <button aria-label="확대경" className="flex w-[17px] justify-center"><Search size={15} color="#555" strokeWidth={2} /></button>
      <button aria-label="축소" className="flex w-[17px] justify-center"><Minus size={14} color="#555" strokeWidth={4} /></button>
      <button aria-label="확대" className="flex w-[17px] justify-center"><Plus size={14} color="#555" strokeWidth={4} /></button>
      <button className="w-[17px] text-[14px] font-bold leading-4 text-[#555]">A</button>
    </div>
  </div>
);

const App = () => {
  return (
    <main className="min-h-screen bg-[#ebebeb] font-['Liberation_Sans','Noto_Sans_CJK_KR',sans-serif] text-[12px] leading-4 text-black">
      <header className="h-[51px] bg-[#d1d1d1]">
        <Toolbar />
        <QuoteBar />
      </header>
      <section className="ml-[3px] mr-[3px] border border-b-0 border-[#8e8e8e] bg-white">
        <PricePanel />
        <VolumePanel />
        <HoldingsPanel />
        <DateAxis />
      </section>
      <BottomBar />
    </main>
  );
};

export default App;
